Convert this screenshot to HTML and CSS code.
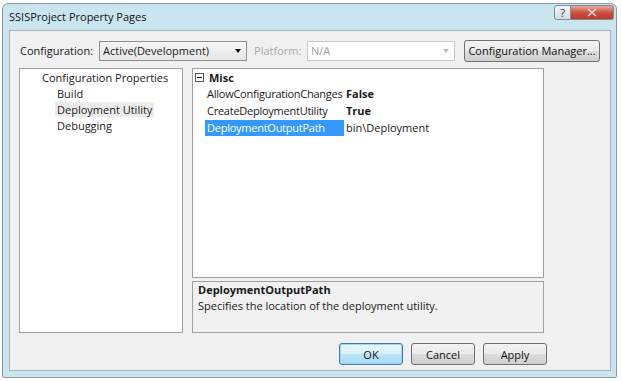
FILE: index.html
```html
<!DOCTYPE html>
<html>
<head>
<meta charset="utf-8">
<link rel="stylesheet" href="styles.css">
</head>
<body>
<div class="window">
  <div class="titlebar">
    <span class="title">SSISProject Property Pages</span>
    <div class="caption-btns">
      <div class="cap help">?</div>
      <div class="cap close"><svg width="10" height="9" viewBox="0 0 10 9"><path d="M1 1 L9 8 M9 1 L1 8" stroke="#f3d6d6" stroke-width="1.6"/></svg></div>
    </div>
  </div>
  <div class="client">
    <div class="toolbar">
      <span class="lbl">Configuration:</span>
      <div class="combo active"><span>Active(Development)</span><span class="arrow"></span></div>
      <span class="lbl disabled plat">Platform:</span>
      <div class="combo dis"><span>N/A</span><span class="arrow"></span></div>
      <div class="btn cfgmgr">Configuration Manager...</div>
    </div>
    <div class="main">
      <div class="tree">
        <div class="node root">Configuration Properties</div>
        <div class="node child">Build</div>
        <div class="node child"><span class="sel">Deployment Utility</span></div>
        <div class="node child">Debugging</div>
      </div>
      <div class="right">
        <div class="grid">
          <div class="cat"><span class="toggle"><svg width="9" height="9" viewBox="0 0 9 9"><rect x="0.5" y="0.5" width="8" height="8" fill="#fff" stroke="#555"/><path d="M2 4.5 H7" stroke="#222"/></svg></span><b>Misc</b></div>
          <div class="prop"><span class="name">AllowConfigurationChanges</span><span class="val bold">False</span></div>
          <div class="prop"><span class="name">CreateDeploymentUtility</span><span class="val bold">True</span></div>
          <div class="prop"><span class="name selected">DeploymentOutputPath</span><span class="val">bin\Deployment</span></div>
        </div>
        <div class="desc">
          <div class="desc-title">DeploymentOutputPath</div>
          <div class="desc-text">Specifies the location of the deployment utility.</div>
        </div>
      </div>
    </div>
    <div class="footer">
      <div class="btn ok">OK</div>
      <div class="btn">Cancel</div>
      <div class="btn">Apply</div>
    </div>
  </div>
</div>
</body>
</html>
```
FILE: styles.css
```css
* { box-sizing: border-box; }
html, body { margin: 0; padding: 0; background: #fff; }
body {
  font-family: "Open Sans", "Noto Sans", sans-serif;
  font-size: 11px;
  color: #1a1a1a;
}
.window {
  margin: 3px 0 0 2px;
  width: 615px;
  height: 375px;
  background: #c9e6f0;
  border: 1px solid #8c9aa6;
  border-radius: 6px 6px 2px 2px;
  padding: 0 5px 6px 6px;
  display: flex;
  flex-direction: column;
}
.titlebar {
  height: 26px;
  display: flex;
  align-items: flex-start;
  justify-content: space-between;
}
.title {
  margin-top: 5px;
  font-size: 11px;
  color: #111;
}
.caption-btns { display: flex; margin-top: 1px; margin-right: -3px; }
.cap {
  height: 15px;
  border: 1px solid #7b8a96;
  display: flex;
  align-items: center;
  justify-content: center;
}
.help {
  width: 17px;
  background: linear-gradient(#f4f6f8, #d4dce2);
  border-radius: 3px 0 0 3px;
  font-size: 11px;
  color: #333;
  line-height: 1;
}
.close {
  width: 43px;
  border-left: none;
  background: linear-gradient(#e7a79c, #cc4b3c 55%, #c0392b);
  border-radius: 0 3px 3px 0;
}
.client {
  flex: 1;
  background: #f0f0f0;
  border: 1px solid #a6b3bd;
  padding: 9px 10px 0 9px;
  display: flex;
  flex-direction: column;
}
.toolbar {
  display: flex;
  align-items: center;
  height: 21px;
}
.lbl { margin-right: 6px; margin-left: 1px; }
.lbl.disabled { color: #a9a9a9; }
.plat { margin-left: 7px; margin-right: 0; width: 53px; }
.combo {
  width: 148px;
  height: 20px;
  border: 1px solid #9a9a9a;
  background: #fff;
  display: flex;
  align-items: center;
  justify-content: space-between;
  padding: 0 5px 0 3px;
}
.combo.active { background: linear-gradient(#f6f6f6, #e6e6e6); border-color: #8e8f8f; }
.combo.dis { border-color: #c9c9c9; color: #a0a0a0; }
.arrow {
  width: 0; height: 0;
  border-left: 3.5px solid transparent;
  border-right: 3.5px solid transparent;
  border-top: 4px solid #111;
}
.combo.dis .arrow { border-top-color: #bbb; }
.btn {
  height: 22px;
  width: 64px;
  border: 1px solid #707070;
  border-radius: 3px;
  background: linear-gradient(#f2f2f2 0%, #ebebeb 49%, #dddddd 50%, #cfcfcf 100%);
  display: flex;
  align-items: center;
  justify-content: center;
  color: #111;
}
.cfgmgr { width: 136px; margin-left: auto; }
.main {
  display: flex;
  margin-top: 7px;
  height: 265px;
}
.tree {
  width: 164px;
  background: #fff;
  border: 1px solid #a0a0a0;
  padding-top: 1px;
}
.node { height: 16px; line-height: 16px; white-space: nowrap; }
.root { padding-left: 22px; }
.child { padding-left: 37px; }
.sel { background: #ebebeb; padding: 0 2px; margin-left: -2px; }
.right {
  margin-left: 9px;
  width: 352px;
  display: flex;
  flex-direction: column;
}
.grid {
  height: 210px;
  background: #fff;
  border: 1px solid #a0a0a0;
  padding-top: 0;
}
.cat { height: 16px; display: flex; align-items: center; padding-left: 2px; }
.toggle { width: 14px; display: flex; align-items: center; }
.prop { height: 17px; display: flex; align-items: center; }
.name { width: 139px; margin-left: 12px; padding-left: 2px; height: 16px; line-height: 16px; white-space: nowrap; letter-spacing: -0.25px; }
.name.selected { background: #3399ff; color: #fff; }
.val { padding-left: 2px; }
.bold { font-weight: bold; }
.desc {
  margin-top: 3px;
  height: 52px;
  border: 1px solid #a0a0a0;
  background: #f0f0f0;
  padding: 0 5px;
  line-height: 16px;
}
.desc-title { font-weight: bold; }
.footer {
  display: flex;
  justify-content: flex-end;
  gap: 8px;
  margin-top: 10px;
  padding-right: 53px;
}
.ok { border-color: #3c7fb1; box-shadow: inset 0 0 0 1px #9ed5f0; background: linear-gradient(#eaf6fd, #d9f0fc 49%, #bee6fd 50%, #a7d9f5); }
```
